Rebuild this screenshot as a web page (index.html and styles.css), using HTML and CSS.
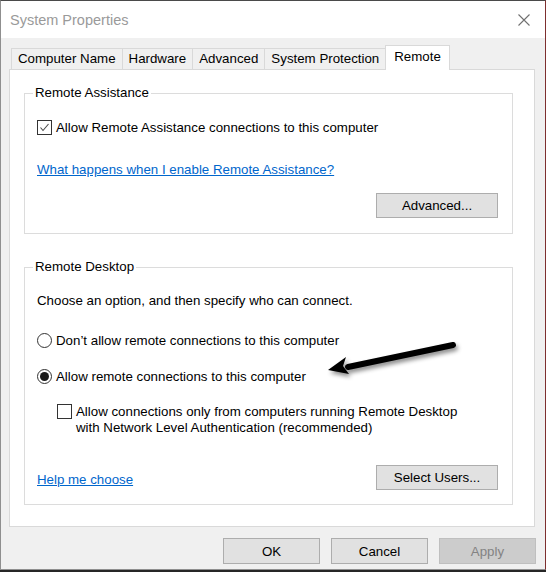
FILE: index.html
```html
<!DOCTYPE html>
<html lang="en">
  <head>
    <meta charset="UTF-8" />
    <meta name="viewport" content="width=device-width, initial-scale=1.0" />
    <title>System Properties</title>
    <link rel="stylesheet" href="styles.css">
  </head>
  <body>
    <div class="window">
      <div class="titlebar">
        <span class="title">System Properties</span>
        <svg class="close" width="12" height="12" viewBox="0 0 12 12">
          <path d="M0.5 0.5 L11.5 11.5 M11.5 0.5 L0.5 11.5" stroke="#707070" stroke-width="1.1" fill="none" />
        </svg>
      </div>

      <div class="content">
        <div class="tabs">
          <div class="tab">Computer Name</div>
          <div class="tab">Hardware</div>
          <div class="tab">Advanced</div>
          <div class="tab">System Protection</div>
          <div class="tab active">Remote</div>
        </div>

        <div class="panel">
          <fieldset class="group">
            <legend>Remote Assistance</legend>
            <div class="group-body">
              <label class="option first">
                <span class="box">
                  <svg width="13" height="13" viewBox="0 0 13 13">
                    <path d="M2.5 6.5 L5 9.5 L10.5 3" stroke="#4a4a4a" stroke-width="1.1" fill="none" />
                  </svg>
                </span>
                Allow Remote Assistance connections to this computer
              </label>
              <a class="link help-ra" href="#">What happens when I enable Remote Assistance?</a>
              <div class="row-end">
                <button class="btn wide">Advanced...</button>
              </div>
            </div>
          </fieldset>

          <fieldset class="group desktop">
            <legend>Remote Desktop</legend>
            <div class="group-body">
              <p class="hint">Choose an option, and then specify who can connect.</p>
              <label class="option radio-1">
                <span class="radio"></span>
                Don’t allow remote connections to this computer
              </label>
              <label class="option radio-2">
                <span class="radio checked"></span>
                Allow remote connections to this computer
              </label>
              <label class="option nla">
                <span class="box"></span>
                <span>Allow connections only from computers running Remote Desktop<br>with Network Level Authentication (recommended)</span>
              </label>
              <div class="row-split">
                <a class="link" href="#">Help me choose</a>
                <button class="btn wide">Select Users...</button>
              </div>
            </div>
          </fieldset>
        </div>

        <div class="actions">
          <button class="btn">OK</button>
          <button class="btn">Cancel</button>
          <button class="btn disabled">Apply</button>
        </div>
      </div>

      <!-- pointer drawn over the dialog -->
      <svg class="arrow" width="150" height="55" viewBox="0 0 150 55">
        <path d="M133 15 L28 37" stroke="#000" stroke-width="6" stroke-linecap="round" fill="none" />
        <polygon points="8,40 26,27 23,36 29,44" fill="#000" />
      </svg>
    </div>
  </body>
</html>
```

FILE: styles.css
```css
* {
  box-sizing: border-box;
}
body {
  margin: 0;
  background-color: #262626;
  font-family: "Liberation Sans", Arial, sans-serif;
  font-size: 13.3px;
  color: #000;
}
.window {
  position: relative;
  width: 546px;
  height: 570px;
  background-color: #f0f0f0;
  border: 1px solid #8f8f8f;
  border-top-color: #4a4a4a;
  border-right-color: #7e2f2f;
}
.titlebar {
  height: 37px;
  background-color: #fff;
  display: flex;
  align-items: center;
  justify-content: space-between;
  padding: 0 15px 0 9px;
}
.title {
  font-size: 14.5px;
  color: #9a9a9a;
}
.content {
  padding: 7px 10px 0 8px;
}

/* tab strip */
.tabs {
  display: flex;
  align-items: flex-end;
  height: 24px;
  padding-left: 2px;
}
.tab {
  height: 21px;
  line-height: 20px;
  padding: 0 6px;
  border: 1px solid #d9d9d9;
  border-bottom: none;
  margin-right: -1px;
  background-color: #f0f0f0;
}
.tab.active {
  position: relative;
  z-index: 1;
  height: 25px;
  line-height: 22px;
  padding: 0 8px;
  margin-bottom: -1px;
  background-color: #fff;
}
.panel {
  height: 458px;
  background-color: #fff;
  border: 1px solid #d9d9d9;
  padding: 15px 21px 0 14px;
}

/* group boxes */
.group {
  margin: 0;
  padding: 0;
  min-width: 0;
  border: 1px solid #dcdcdc;
}
.group.desktop {
  margin-top: 25px;
}
.group.desktop .group-body {
  padding-bottom: 14px;
}
legend {
  line-height: 16px;
  padding: 0 2px;
  margin-left: 8px;
}
.group-body {
  display: flex;
  flex-direction: column;
  align-items: flex-start;
  padding: 0 14px 15px 12px;
  line-height: 16px;
}
.option {
  display: flex;
  align-items: flex-start;
}
.option.first {
  margin-top: 19px;
}
.help-ra {
  margin-top: 26px;
}
.hint {
  margin: 18px 0 0 0;
}
.radio-1 {
  margin-top: 24px;
}
.radio-2 {
  margin-top: 20px;
}
.nla {
  margin-top: 19px;
  margin-left: 20px;
}
.box {
  flex: none;
  width: 15px;
  height: 15px;
  margin-right: 4px;
  border: 1px solid #333;
  background-color: #fff;
}
.box svg {
  display: block;
}
.radio {
  flex: none;
  position: relative;
  width: 15px;
  height: 15px;
  margin-right: 4px;
  border: 1px solid #333;
  border-radius: 50%;
  background-color: #fff;
}
.radio.checked::after {
  content: "";
  position: absolute;
  left: 2px;
  top: 2px;
  width: 9px;
  height: 9px;
  border-radius: 50%;
  background-color: #1a1a1a;
}
.link {
  color: #0066cc;
  text-decoration: underline;
}
.row-end {
  align-self: stretch;
  display: flex;
  justify-content: flex-end;
  margin-top: 15px;
}
.row-split {
  align-self: stretch;
  display: flex;
  justify-content: space-between;
  align-items: flex-end;
  margin-top: 29px;
}
.row-split .link {
  margin-bottom: 2px;
}

/* buttons */
.btn {
  width: 97px;
  height: 26px;
  padding: 0;
  font-family: inherit;
  font-size: 13.3px;
  color: #000;
  background-color: #e1e1e1;
  border: 1px solid #adadad;
}
.btn.wide {
  width: 122px;
  height: 25px;
}
.btn.disabled {
  color: #838383;
  background-color: #cccccc;
  border-color: #bfbfbf;
}
.actions {
  display: flex;
  justify-content: flex-end;
  gap: 11px;
  margin-top: 11px;
  margin-right: -1px;
}
.arrow {
  position: absolute;
  left: 319px;
  top: 329px;
  filter: drop-shadow(2px 3px 2px rgba(0, 0, 0, 0.45));
}
```
